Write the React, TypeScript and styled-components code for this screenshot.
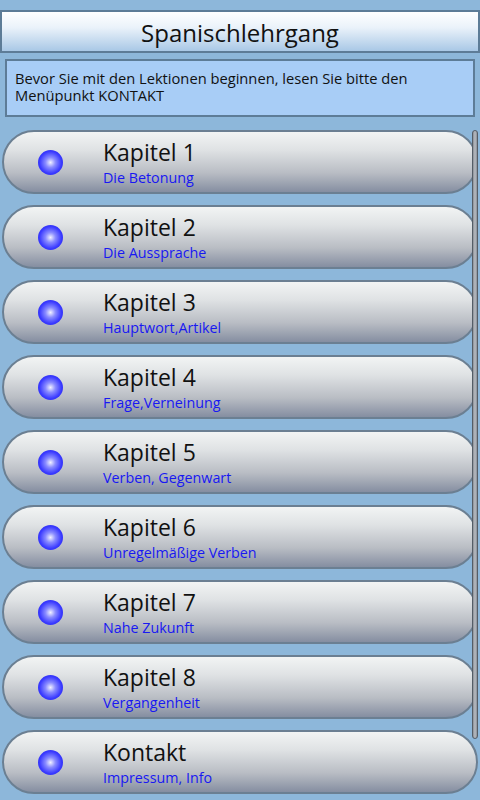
import React from "react";
import styled, {createGlobalStyle} from "styled-components";

const chapters = [
  {title: "Kapitel 1", sub: "Die Betonung"},
  {title: "Kapitel 2", sub: "Die Aussprache"},
  {title: "Kapitel 3", sub: "Hauptwort,Artikel"},
  {title: "Kapitel 4", sub: "Frage,Verneinung"},
  {title: "Kapitel 5", sub: "Verben, Gegenwart"},
  {title: "Kapitel 6", sub: "Unregelmäßige Verben"},
  {title: "Kapitel 7", sub: "Nahe Zukunft"},
  {title: "Kapitel 8", sub: "Vergangenheit"},
  {title: "Kontakt", sub: "Impressum, Info"},
];

const GlobalStyle = createGlobalStyle`
  html, body {
    margin: 0;
    padding: 0;
    background: #8db7da;
    font-family: "Open Sans", "DejaVu Sans", sans-serif;
  }
`;

export default function App() {
  return (
    <Page>
      <GlobalStyle />
      <TitleBar>Spanischlehrgang</TitleBar>
      <Notice>
        Bevor Sie mit den Lektionen beginnen, lesen Sie bitte den Menüpunkt KONTAKT
      </Notice>
      <ListArea>
        {chapters.map((c) => (
          <ChapterButton key={c.title}>
            <Bullet />
            <Labels>
              <Title>{c.title}</Title>
              <Subtitle>{c.sub}</Subtitle>
            </Labels>
          </ChapterButton>
        ))}
        <ScrollThumb />
      </ListArea>
    </Page>
  );
}

const Page = styled.div`
  width: 480px;
  height: 800px;
  overflow: hidden;
  padding-top: 10px;
  box-sizing: border-box;
`;

const TitleBar = styled.div`
  height: 43px;
  box-sizing: border-box;
  border: 2px solid #5d7c97;
  background: linear-gradient(to bottom, #ffffff 0%, #eaf2fa 40%, #a9c8e6 100%);
  display: flex;
  align-items: center;
  justify-content: center;
  padding-top: 2px;
  font-size: 24px;
  color: #111;
`;

const Notice = styled.div`
  margin: 6px 5px 0 5px;
  height: 58px;
  box-sizing: border-box;
  border: 2px solid #5d7c97;
  background: #a8cdf6;
  padding: 9px 8px 0 8px;
  font-size: 14.7px;
  line-height: 17px;
  color: #111;
`;

const ListArea = styled.div`
  position: relative;
  margin-top: 13px;
  display: flex;
  flex-direction: column;
  gap: 11px;
  padding: 0 2px;
`;

const ChapterButton = styled.div`
  height: 64px;
  box-sizing: border-box;
  border: 2px solid #6b7f92;
  border-radius: 32px;
  background: linear-gradient(to bottom, #f2f4f4 0%, #dfe2e4 30%, #b9bdc4 68%, #858ea1 100%);
  display: flex;
  align-items: center;
`;

const Bullet = styled.div`
  width: 25px;
  height: 25px;
  margin-left: 34px;
  border-radius: 50%;
  background: radial-gradient(circle at 50% 50%, #f0f0ff 0%, #8a8cff 28%, #3a3aff 62%, #1c1ce6 100%);
`;

const Labels = styled.div`
  margin-left: 40px;
  display: flex;
  flex-direction: column;
  margin-top: -1px;
`;

const Title = styled.div`
  font-size: 23px;
  line-height: 30px;
  color: #111;
`;

const Subtitle = styled.div`
  font-size: 14.3px;
  line-height: 18px;
  margin-top: 2px;
  color: #1818f2;
`;

const ScrollThumb = styled.div`
  position: absolute;
  right: 2px;
  top: 0;
  width: 4px;
  height: 607px;
  border: 1px solid #555d66;
  border-radius: 3px;
  background: linear-gradient(to right, #8a8f96, #b8bcc2, #8a8f96);
`;
